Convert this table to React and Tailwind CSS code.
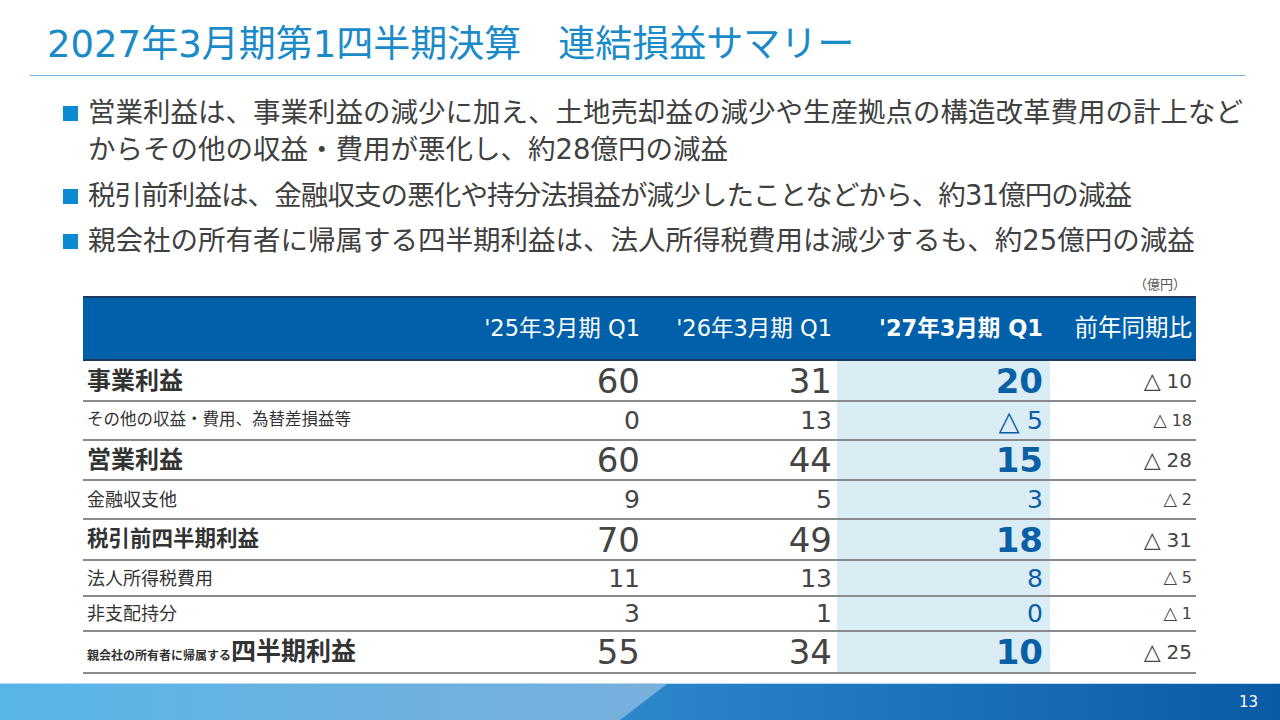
import React from "react";

// Rows of the consolidated P&L summary table.
const rows = [
  {
    key: "jigyo",
    big: true,
    label: <span className="text-[24px] font-bold">事業利益</span>,
    values: ["60", "31", "20", "△ 10"],
    height: "h-[41px]",
  },
  {
    key: "sonota",
    big: false,
    label: <span className="text-[16.5px]">その他の収益・費用、為替差損益等</span>,
    values: ["0", "13", "△ 5", "△ 18"],
    height: "h-[39px]",
  },
  {
    key: "eigyo",
    big: true,
    label: <span className="text-[24px] font-bold">営業利益</span>,
    values: ["60", "44", "15", "△ 28"],
    height: "h-[40px]",
  },
  {
    key: "kinyu",
    big: false,
    label: <span className="text-[18px]">金融収支他</span>,
    values: ["9", "5", "3", "△ 2"],
    height: "h-[39px]",
  },
  {
    key: "zeibikimae",
    big: true,
    label: <span className="text-[21.5px] font-bold">税引前四半期利益</span>,
    values: ["70", "49", "18", "△ 31"],
    height: "h-[41px]",
  },
  {
    key: "hojin",
    big: false,
    label: <span className="text-[18px]">法人所得税費用</span>,
    values: ["11", "13", "8", "△ 5"],
    height: "h-[36px]",
  },
  {
    key: "hishihai",
    big: false,
    label: <span className="text-[18px]">非支配持分</span>,
    values: ["3", "1", "0", "△ 1"],
    height: "h-[35px]",
  },
  {
    key: "oyagaisha",
    big: true,
    label: (
      <span className="flex items-baseline font-bold">
        <span className="text-[12px]">親会社の所有者に帰属する</span>
        <span className="text-[25px]">四半期利益</span>
      </span>
    ),
    values: ["55", "34", "10", "△ 25"],
    height: "h-[42px]",
  },
];

// Bullet texts; the slide's kana are set a bit tighter, hence the per-line tracking.
const bullets = [
  {
    text: "営業利益は、事業利益の減少に加え、土地売却益の減少や生産拠点の構造改革費用の計上などからその他の収益・費用が悪化し、約28億円の減益",
    tracking: "",
  },
  {
    text: "税引前利益は、金融収支の悪化や持分法損益が減少したことなどから、約31億円の減益",
    tracking: "tracking-[-0.9px]",
  },
  {
    text: "親会社の所有者に帰属する四半期利益は、法人所得税費用は減少するも、約25億円の減益",
    tracking: "",
  },
];

// Negative values are written with a triangle, drawn a little larger as in the slide.
const Value = ({ text }) => {
  if (!text.startsWith("△")) return text;
  return (
    <>
      <span className="text-[1.1em] font-normal leading-none">△</span>
      <span className="ml-[0.3em]">{text.slice(2)}</span>
    </>
  );
};

const SummaryRow = ({ row }) => {
  const numSize = row.big ? "text-[34px]" : "text-[25px]";
  const diffSize = row.big ? "text-[20px]" : "text-[16px]";
  return (
    <>
      <div
        className={`${row.height} flex items-center pl-[4px] border-b-2 border-[#8a8a8a] text-[#333333]`}
      >
        {row.label}
      </div>
      <div
        className={`${row.height} ${numSize} flex items-center justify-end pr-[5px] border-b-2 border-[#8a8a8a] text-[#444444] leading-none`}
      >
        <Value text={row.values[0]} />
      </div>
      <div
        className={`${row.height} ${numSize} flex items-center justify-end pr-[5px] border-b-2 border-[#8a8a8a] text-[#444444] leading-none`}
      >
        <Value text={row.values[1]} />
      </div>
      <div
        className={`${row.height} ${numSize} ${
          row.big ? "font-bold" : ""
        } flex items-center justify-end pr-[7px] border-b-2 border-[#8a8a8a] bg-[#daedf4] text-[#0b5fa5] leading-none`}
      >
        <Value text={row.values[2]} />
      </div>
      <div
        className={`${row.height} ${diffSize} flex items-center justify-end pr-[4px] border-b-2 border-[#8a8a8a] text-[#444444] leading-none`}
      >
        <Value text={row.values[3]} />
      </div>
    </>
  );
};

export default function App() {
  return (
    <div className="w-[1280px] h-[720px] bg-white overflow-hidden flex flex-col font-['DejaVu_Sans','Noto_Sans_CJK_JP',sans-serif]">
      {/* Title */}
      <h1 className="pt-[22px] pl-[47px] text-[37px] leading-[46px] text-[#1a8ac9] whitespace-nowrap">
        2027年3月期第1四半期決算　連結損益サマリー
      </h1>
      <div className="ml-[30px] mt-[7px] w-[1215px] h-px bg-[#6db3dd]" />

      {/* Bullet points */}
      <ul className="mt-[18px] pl-[63px] pr-[20px] flex flex-col gap-[8.5px] text-[27.5px] leading-[37px] text-[#404040]">
        {bullets.map(b => (
          <li key={b.text} className="flex">
            <span className="w-[15px] h-[15px] mt-[12px] mr-[10px] flex-none bg-[#0a8ad2]" />
            <span className={`flex-1 ${b.tracking}`}>{b.text}</span>
          </li>
        ))}
      </ul>

      {/* Table */}
      <div className="ml-[83px] w-[1113px] mt-[17px]">
        <div className="flex justify-end pr-[10px] text-[13px] leading-[18px] text-[#555555]">
          （億円）
        </div>
        <div className="mt-[2px] grid grid-cols-[372px_190px_192px_213px_146px]">
          {/* Header */}
          <div className="h-[65px] bg-[#0060aa] border-y-2 border-[#1b3a5c]" />
          <div className="h-[65px] bg-[#0060aa] border-y-2 border-[#1b3a5c] flex items-center justify-end pr-[5px] text-[22.5px] text-white whitespace-nowrap">
            '25年3月期 Q1
          </div>
          <div className="h-[65px] bg-[#0060aa] border-y-2 border-[#1b3a5c] flex items-center justify-end pr-[5px] text-[22.5px] text-white whitespace-nowrap">
            '26年3月期 Q1
          </div>
          <div className="h-[65px] bg-[#0060aa] border-y-2 border-[#1b3a5c] flex items-center justify-end pr-[7px] text-[22.5px] font-bold text-white whitespace-nowrap">
            '27年3月期 Q1
          </div>
          <div className="h-[65px] bg-[#0060aa] border-y-2 border-[#1b3a5c] flex items-center justify-end pr-[4px] text-[23.5px] text-white whitespace-nowrap">
            前年同期比
          </div>

          {rows.map(row => (
            <SummaryRow key={row.key} row={row} />
          ))}
        </div>
      </div>

      {/* Footer band */}
      <div className="mt-auto h-[37px] flex border-t border-[#b5daf0]">
        <div className="w-[667px] flex-none bg-gradient-to-r from-[#58b5e8] to-[#78afdc]" />
        <div className="-ml-[47px] flex-1 flex items-center justify-end pr-[22px] bg-gradient-to-r from-[#2d88ca] to-[#0a5aa6] [clip-path:polygon(47px_0,100%_0,100%_100%,0_100%)]">
          <span className="text-[15px] text-white">13</span>
        </div>
      </div>
    </div>
  );
}
